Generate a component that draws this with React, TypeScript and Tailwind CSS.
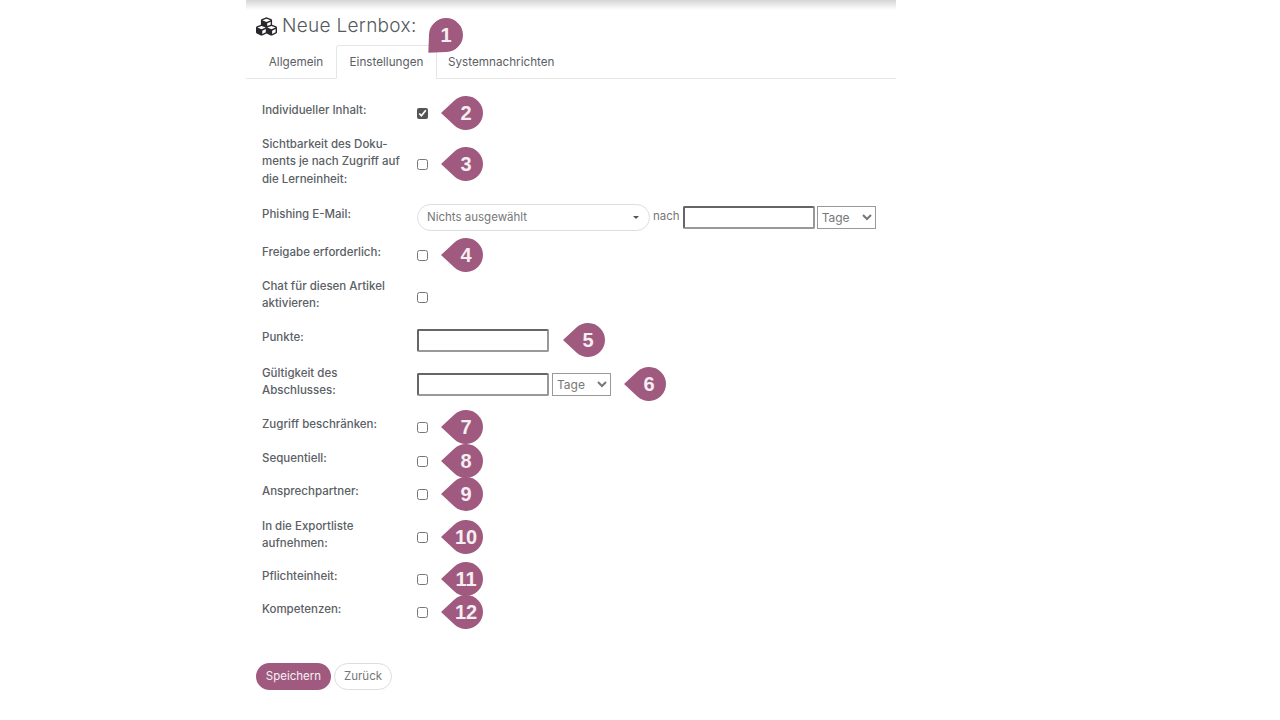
import { FaCubes } from "react-icons/fa";

const font = "font-['Inter','Liberation_Sans',sans-serif]";

function Badge({ n, className = "", tipClass = "" }: { n: number; className?: string; tipClass?: string }) {
  return (
    <span className={`relative flex h-[34px] w-[34px] items-center justify-center ${className}`}>
      <svg
        viewBox="0 0 42 34"
        className={`absolute left-[-8px] top-0 h-[34px] w-[42px] origin-[25px_17px] fill-[#a05a7f] ${tipClass}`}
      >
        <path d="M0 17 L13.44 4.53 A17 17 0 1 1 13.44 29.47 Z" />
      </svg>
      <span className="relative font-['Liberation_Sans',sans-serif] text-[20px] font-bold leading-none text-[#f5eef2]">
        {n}
      </span>
    </span>
  );
}

function Check({ checked = false }: { checked?: boolean }) {
  return (
    <input
      type="checkbox"
      defaultChecked={checked}
      className="m-0 h-[11px] w-[11px] accent-[#555555]"
    />
  );
}

function Label({ children }: { children: React.ReactNode }) {
  return (
    <div className="mb-[4px] w-[155px] shrink-0 pr-[12px] text-[11.5px] font-medium leading-[17.5px] text-[#5a6065]">
      {children}
    </div>
  );
}

function TextBox() {
  return (
    <input
      type="text"
      className="h-[23px] w-[132px] rounded-[2px] border-2 border-[#666666] border-r-[#999999] border-b-[#999999] bg-white"
    />
  );
}

function Unit() {
  return (
    <select className="block h-[23px] w-[59px] border border-[#999999] bg-white pl-0 text-[12px] text-[#777777]">
      <option>Tage</option>
    </select>
  );
}

const checkRows = [
  { label: "Zugriff beschränken:", h: "h-[42px]", n: 7 },
  { label: "Sequentiell:", h: "h-[26px]", n: 8 },
  { label: "Ansprechpartner:", h: "h-[40px]", n: 9 },
  { label: <>In die Exportliste<br />aufnehmen:</>, h: "h-[46px]", n: 10 },
  { label: "Pflichteinheit:", h: "h-[38px]", n: 11 },
  { label: "Kompetenzen:", h: "h-[28px]", n: 12 },
];

export default function App() {
  return (
    <div className={`h-[720px] w-[1280px] overflow-hidden bg-white ${font}`}>
      <div className="ml-[246px] w-[650px]">
        <div className="h-[10px] bg-gradient-to-b from-[#d6d6d6] to-white" />

        <div className="mt-[4px] flex h-[24px] items-center pl-[10px] text-[#555a5e]">
          <FaCubes className="mr-[5px] text-[21px] text-[#26262b]" />
          <h1 className="text-[19px] font-light tracking-[0.3px]">Neue Lernbox:</h1>
        </div>

        {/* Tabs */}
        <div className="relative mt-[7px] flex h-[34px] items-stretch border-b border-[#e6e6e6] pl-[10px] pt-[2px] text-[11.7px] text-[#5a6065]">
          <div className="flex w-[80px] items-center justify-center">Allgemein</div>
          <div className="mb-[-1px] mt-[-2px] flex w-[101px] items-center justify-center rounded-t-[3px] border border-[#e6e6e6] border-b-white bg-white pt-[2px]">
            Einstellungen
          </div>
          <div className="flex items-center pl-[11px]">Systemnachrichten</div>
          <Badge n={1} tipClass="-rotate-45" className="!absolute left-[183px] top-[-27px]" />
        </div>

        {/* Form */}
        <div className="mt-[19px] pl-[16px]">
          <div className="flex h-[30px] items-center">
            <Label>Individueller Inhalt:</Label>
            <Check checked />
            <Badge n={2} className="ml-[21px]" />
          </div>
          <div className="flex h-[72px] items-center">
            <Label>Sichtbarkeit des Doku-<br />ments je nach Zugriff auf<br />die Lerneinheit:</Label>
            <Check />
            <Badge n={3} className="ml-[21px]" />
          </div>
          <div className="flex h-[34px] items-center">
            <Label>Phishing E-Mail:</Label>
            <div className="flex h-[27px] w-[233px] items-center justify-between rounded-full border border-[#dddddd] pl-[9px] pr-[10px] pt-[1px] text-[11.5px] text-[#777777]">
              Nichts ausgewählt
              <span className="h-0 w-0 border-x-[3px] border-t-[3px] border-x-transparent border-t-[#555555]" />
            </div>
            <span className="mx-[3px] text-[11.5px] text-[#777777]">nach</span>
            <TextBox />
            <span className="ml-[2px]"><Unit /></span>
          </div>
          <div className="flex h-[42px] items-center">
            <Label>Freigabe erforderlich:</Label>
            <Check />
            <Badge n={4} className="ml-[21px]" />
          </div>
          <div className="flex h-[42px] items-center">
            <Label>Chat für diesen Artikel<br />aktivieren:</Label>
            <Check />
          </div>
          <div className="flex h-[44px] items-center">
            <Label>Punkte:</Label>
            <TextBox />
            <Badge n={5} className="ml-[22px]" />
          </div>
          <div className="flex h-[44px] items-center">
            <Label>Gültigkeit des<br />Abschlusses:</Label>
            <TextBox />
            <span className="ml-[3px]"><Unit /></span>
            <Badge n={6} className="ml-[21px]" />
          </div>
          {checkRows.map((row) => (
            <div key={row.n} className={`flex items-center ${row.h}`}>
              <Label>{row.label}</Label>
              <Check />
              <Badge n={row.n} className="ml-[21px]" />
            </div>
          ))}
        </div>

        {/* Actions */}
        <div className="mt-[37px] flex gap-[3px] pl-[10px] text-[11.5px]">
          <button className="h-[27px] w-[75px] rounded-full bg-[#a05a7f] text-[#f7f0f4]">Speichern</button>
          <button className="h-[27px] w-[58px] rounded-full border border-[#dddddd] bg-white text-[#777777]">Zurück</button>
        </div>
      </div>
    </div>
  );
}
